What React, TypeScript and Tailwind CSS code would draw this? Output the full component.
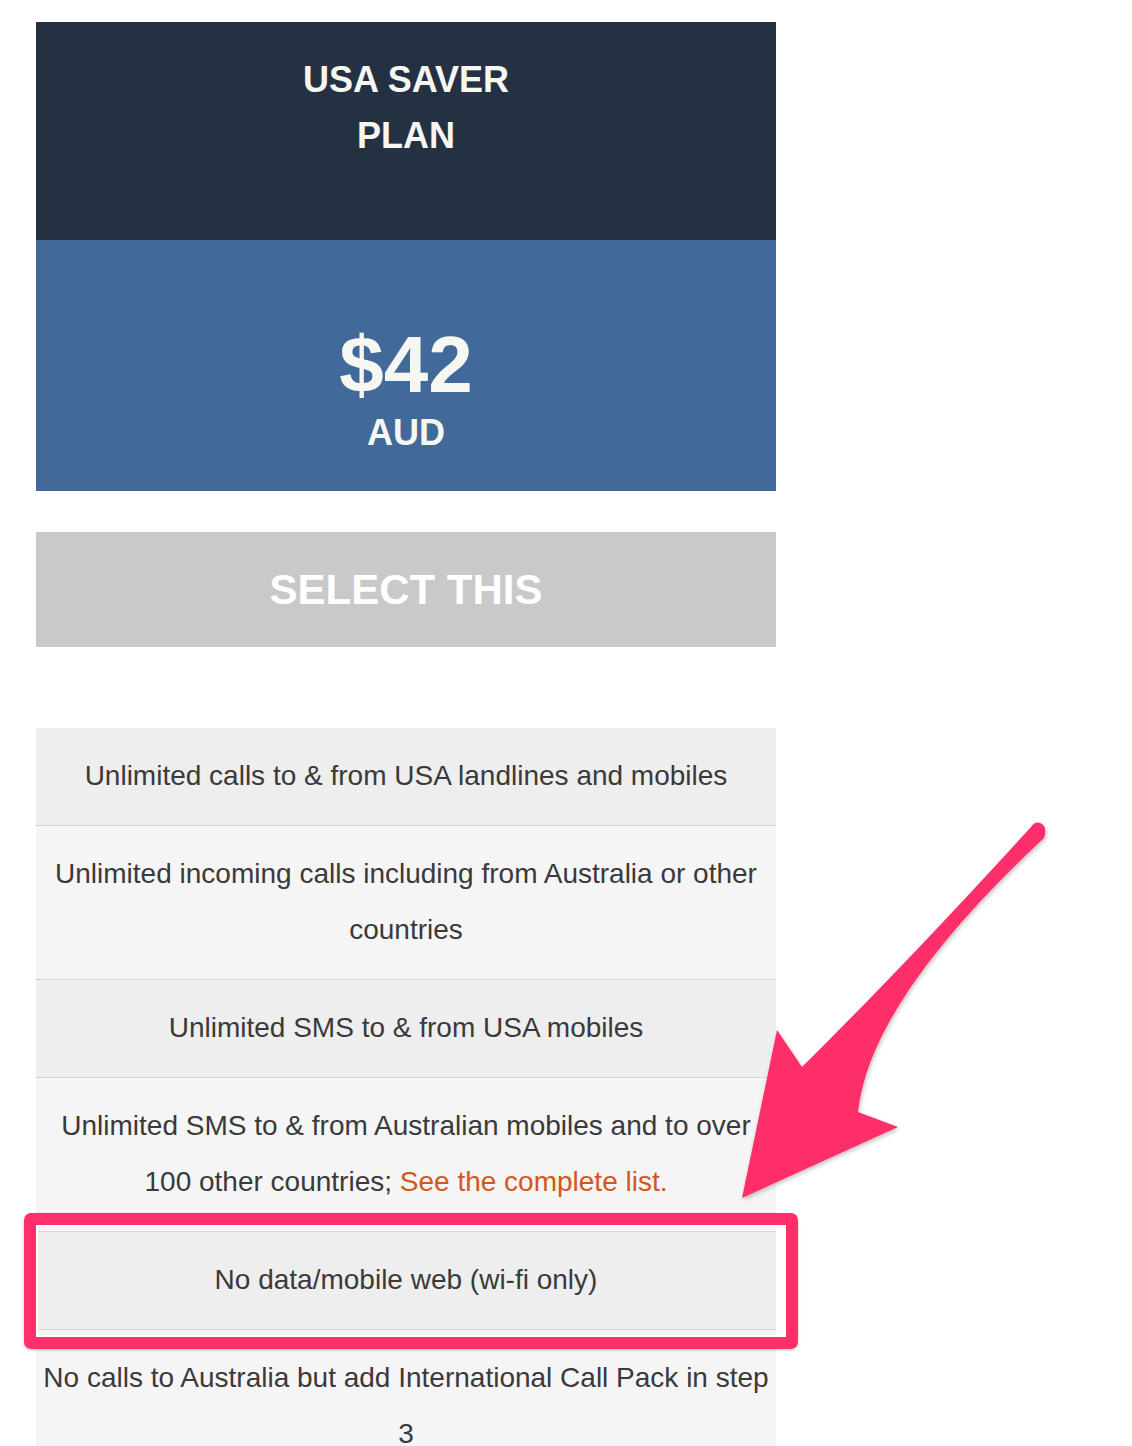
const features = [
  { text: "Unlimited calls to & from USA landlines and mobiles", bg: "bg-[#eeeeee]" },
  { text: "Unlimited incoming calls including from Australia or other countries", bg: "bg-[#f5f5f5]" },
  { text: "Unlimited SMS to & from USA mobiles", bg: "bg-[#eeeeee]" },
  { text: "Unlimited SMS to & from Australian mobiles and to over 100 other countries;", link: "See the complete list.", bg: "bg-[#f5f5f5]" },
  { text: "No data/mobile web (wi-fi only)", bg: "bg-[#eeeeee]" },
  { text: "No calls to Australia but add International Call Pack in step 3", bg: "bg-[#f5f5f5]" },
]

const App = () => {
  return (
    <div className="relative w-[1132px] h-[1446px] overflow-hidden bg-white font-['Liberation_Sans',Arial,sans-serif]">
      <div className="ml-[36px] pt-[22px] w-[740px]">
        {/* plan header */}
        <div className="h-[218px] bg-[#243142] pt-[30px] text-center text-[36px] leading-[56px] font-bold text-[#f7f7f2]">
          USA SAVER
          <br />
          PLAN
        </div>

        {/* price */}
        <div className="h-[251px] bg-[#416a9a] pt-[85px] flex flex-col items-center text-[#f7f7f2] font-bold">
          <div className="text-[80px] leading-[80px]">$42</div>
          <div className="mt-[10px] text-[36px] leading-[36px]">AUD</div>
        </div>

        <button className="mt-[41px] w-full h-[115px] bg-[#c9c9c9] text-white text-[42px] font-bold">
          SELECT THIS
        </button>

        <div className="mt-[81px]">
          {features.map((f, i) => (
            <div
              key={i}
              className={`${f.bg} px-[6px] pt-[20px] pb-[21px] text-center text-[28px] leading-[56px] text-[#3a3a3a] border-b border-dotted border-[#bdbdbd]`}
            >
              {f.text}
              {f.link && <span className="text-[#d4561b]"> {f.link}</span>}
            </div>
          ))}
        </div>
      </div>

      {/* highlight box */}
      <div className="absolute left-[24px] top-[1213px] w-[774px] h-[136px] rounded-[7px] border-[12px] border-[#fe2f6b] shadow-[inset_0_0_0_2px_#ffffff,0_1px_3px_rgba(0,0,0,0.25)]" />

      {/* arrow */}
      <svg className="absolute left-0 top-0" width="1132" height="1446" viewBox="0 0 1132 1446">
        <defs>
          <filter id="sh" x="-10%" y="-10%" width="120%" height="120%">
            <feDropShadow dx="1" dy="2" stdDeviation="2" floodColor="#000" floodOpacity="0.25" />
          </filter>
        </defs>
        <path
          d="M1031 827 Q905 965 802 1067 L777 1030 L742 1198 L898 1127 L858 1112 Q870 1000 1044 838 Q1048 826 1040 823 Q1035 821 1031 827 Z"
          fill="#fe2f6b"
          filter="url(#sh)"
        />
      </svg>
    </div>
  )
}

export default App
